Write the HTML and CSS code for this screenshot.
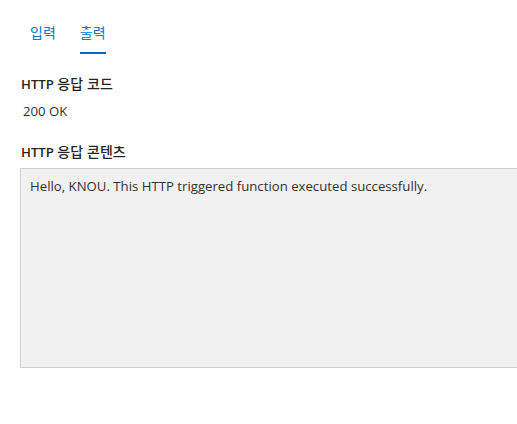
FILE: index.html
```html
<!DOCTYPE html>
<html lang="ko">
<head>
<meta charset="utf-8">
<link rel="stylesheet" href="styles.css">
</head>
<body>
<div class="page">
  <div class="tabs">
    <div class="tab"><span class="ko">입력</span></div>
    <div class="tab active"><span class="ko">출력</span></div>
  </div>
  <div class="section">
    <div class="label">HTTP <span class="ko">응답 코드</span></div>
    <div class="code">200 OK</div>
  </div>
  <div class="section content-section">
    <div class="label">HTTP <span class="ko">응답 콘텐츠</span></div>
    <div class="box">Hello, KNOU. This HTTP triggered function executed successfully.</div>
  </div>
</div>
</body>
</html>
```
FILE: styles.css
```css
html, body {
  margin: 0;
  padding: 0;
  background: #ffffff;
}
body {
  font-family: "Open Sans", "Noto Sans CJK KR", sans-serif;
  font-size: 13.2px;
  color: #323130;
}
.ko {
  font-family: "Noto Sans CJK KR", sans-serif;
  font-size: 14px;
  font-weight: 500;
}
.page {
  padding: 20px 0 0 20px;
}
.tabs {
  display: flex;
  gap: 24px;
  padding-left: 10px;
  height: 35px;
}
.tab {
  color: #0078d4;
  line-height: 24px;
  height: 34px;
  box-sizing: border-box;
}
.tab .ko {
  font-weight: 400;
}
.tab.active {
  border-bottom: 2px solid #0063d8;
}
.section {
  margin-top: 19px;
}
.label {
  font-weight: 600;
  line-height: 18px;
  padding-left: 1px;
  color: #252423;
}
.code {
  margin-top: 9px;
  padding-left: 3px;
  line-height: 18px;
}
.content-section {
  margin-top: 22px;
}
.box {
  margin-top: 7px;
  border: 1px solid #d0d0d0;
  border-right: none;
  background: #f1f1f1;
  padding: 8px 9px;
  box-sizing: border-box;
  height: 200px;
  line-height: 18px;
}
```
